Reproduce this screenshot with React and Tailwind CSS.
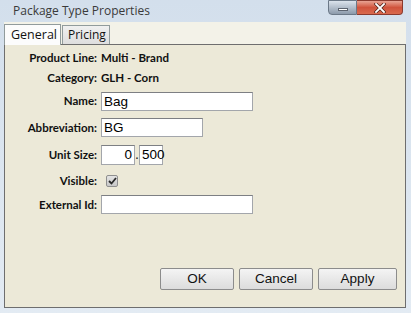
export default function App() {
  const label = 'w-[96px] pr-[4px] text-right text-[11.5px] font-bold text-[#111] font-["Lato",sans-serif]'
  const value = 'text-[11.5px] font-bold text-[#111] font-["Lato",sans-serif]'
  const input = 'h-[19px] border border-[#a3a6ab] border-t-[#7d7f83] bg-white px-[2px] text-[13.5px] leading-[17px] text-black font-["Liberation_Sans",Arial,sans-serif]'
  const button = 'h-[22px] rounded-[2px] border border-[#8c8c8c] bg-gradient-to-b from-[#f4f4f4] to-[#dcdcdc] text-[13.5px] text-[#111] font-["Liberation_Sans",Arial,sans-serif]'

  return (
    <div className="relative w-[411px] h-[313px] overflow-hidden bg-gradient-to-b from-[#d3dfec] to-[#e3ebf3] font-['Open_Sans',sans-serif]">
      {/* Title bar */}
      <div className="flex h-[22px] items-start justify-between">
        <div className="pl-[13px] pt-[2px] text-[12px] font-medium text-[#3a3a3a]">
          Package Type Properties
        </div>
        <div className="mr-[8px] flex">
          <div className="flex h-[15px] w-[29px] items-center justify-center rounded-bl-[4px] border border-[#6b7887] bg-gradient-to-b from-[#dbe3ec] to-[#8c9aab]">
            <span className="mt-[3px] h-[3px] w-[10px] border border-[#5c6470] bg-white" />
          </div>
          <div className="flex h-[15px] w-[46px] items-center justify-center rounded-br-[4px] border border-l-0 border-[#8b3a2e] bg-gradient-to-b from-[#e8a393] via-[#d0533c] to-[#d96a4e]">
            <svg width="12" height="10" viewBox="0 0 12 10">
              <path d="M2 1 L10 9 M10 1 L2 9" stroke="#4a2018" strokeWidth="3.2" strokeLinecap="square" />
              <path d="M2 1 L10 9 M10 1 L2 9" stroke="#ffffff" strokeWidth="1.8" strokeLinecap="square" />
            </svg>
          </div>
        </div>
      </div>

      {/* Client area */}
      <div className="mx-[4px] h-[285px] w-[402px] bg-[#f3f2e8]">
        {/* Tabs */}
        <div className="flex h-[22px] items-end pt-[2px]">
          <div className="relative z-10 -mb-px h-[21px] w-[57px] border border-b-0 border-[#919b9c] bg-[#fcfcfc] pl-[6px] pt-[1px] text-[12.5px] text-[#111]">
            General
          </div>
          <div className="ml-[1px] h-[19px] w-[48px] border border-b-0 border-[#919b9c] bg-gradient-to-b from-[#f0f0f0] to-[#dedede] pl-[5px] text-[12px] leading-[18px] text-[#111]">
            Pricing
          </div>
        </div>

        {/* Panel */}
        <div className="flex h-[264px] flex-col border border-[#6e6e6e] bg-[#ece9d8]">
          <div className="flex flex-col pt-[3px]">
            <div className="flex h-[20px] items-center">
              <div className={label}>Product Line:</div>
              <div className={value}>Multi - Brand</div>
            </div>
            <div className="flex h-[20px] items-center">
              <div className={label}>Category:</div>
              <div className={value}>GLH - Corn</div>
            </div>
            <div className="flex h-[26px] items-center">
              <div className={label}>Name:</div>
              <div className={`${input} w-[152px]`}>Bag</div>
            </div>
            <div className="flex h-[27px] items-center">
              <div className={label}>Abbreviation:</div>
              <div className={`${input} w-[102px]`}>BG</div>
            </div>
            <div className="flex h-[27px] items-center">
              <div className={label}>Unit Size:</div>
              <div className={`${input} h-[20px] w-[34px] text-right`}>0</div>
              <span className="w-[4px] text-[14px] text-[#222] font-['Liberation_Sans',Arial,sans-serif]">.</span>
              <div className={`${input} h-[20px] w-[24px] px-[1px]`}>500</div>
            </div>
            <div className="flex h-[26px] items-center">
              <div className={label}>Visible:</div>
              <div className="ml-[5px] flex h-[12px] w-[12px] items-center justify-center rounded-[2px] border border-[#8f8f8f] bg-gradient-to-b from-[#e4e4e4] to-[#c8c8c8]">
                <svg width="9" height="8" viewBox="0 0 9 8">
                  <path d="M1 4 L3.5 6.5 L8 1" fill="none" stroke="#2a2a2a" strokeWidth="1.8" />
                </svg>
              </div>
            </div>
            <div className="flex h-[21px] items-center">
              <div className={label}>External Id:</div>
              <div className={`${input} w-[152px]`} />
            </div>
          </div>

          <div className="mt-auto mb-[17px] mr-[8px] flex justify-end gap-[5px]">
            <button className={`${button} w-[74px]`}>OK</button>
            <button className={`${button} w-[74px]`}>Cancel</button>
            <button className={`${button} w-[79px]`}>Apply</button>
          </div>
        </div>
      </div>
    </div>
  )
}
